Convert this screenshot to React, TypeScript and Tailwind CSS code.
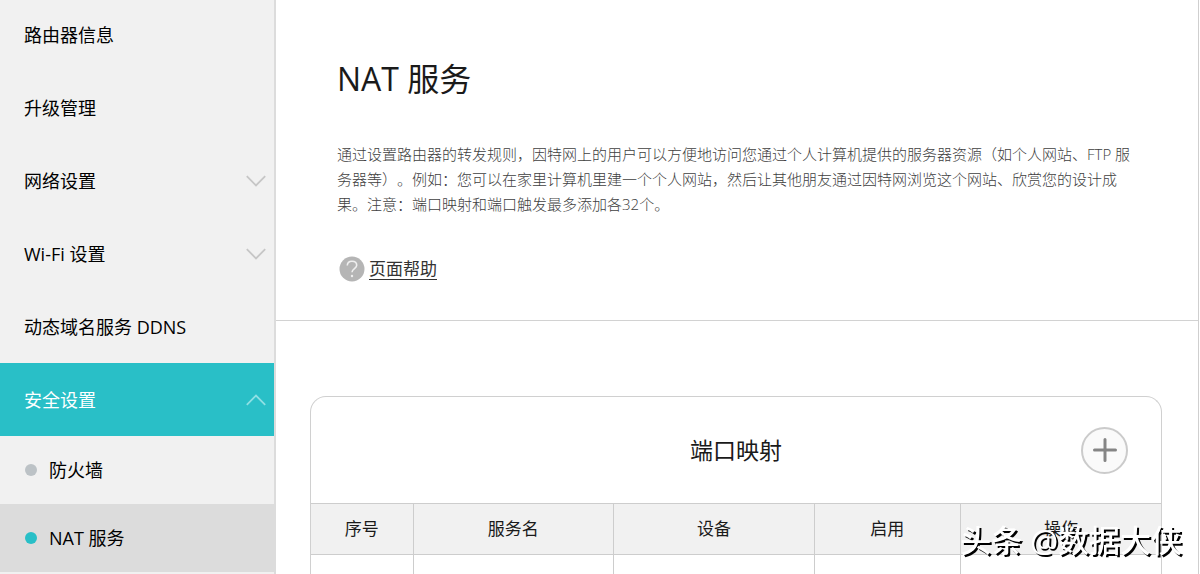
import { clsx } from "clsx";

const menu = [
  { label: "路由器信息" },
  { label: "升级管理" },
  { label: "网络设置", expandable: true },
  { label: "Wi-Fi 设置", expandable: true },
  { label: "动态域名服务 DDNS" },
  { label: "安全设置", expandable: true, open: true },
];

const subMenu = [
  { label: "防火墙" },
  { label: "NAT 服务", active: true },
];

const columns = [
  { label: "序号", width: "w-[12%]" },
  { label: "服务名", width: "w-[23.6%]" },
  { label: "设备", width: "w-[23.6%]" },
  { label: "启用", width: "w-[17.2%]" },
  { label: "操作", width: "w-[23.6%]" },
];

function Chevron({ open }: { open?: boolean }) {
  return (
    <svg
      viewBox="0 0 20 12"
      className={clsx("w-5 h-3", open ? "text-[#8fe0e4] rotate-180" : "text-[#c6c6c6]")}
      fill="none"
      stroke="currentColor"
      strokeWidth="1.8"
      aria-hidden="true"
    >
      <path d="M0.8 1.2 L10 10.4 L19.2 1.2" />
    </svg>
  );
}

function SideBar() {
  return (
    <nav className="w-[276px] shrink-0 bg-[#f1f1f1] border-r-2 border-[#dcdcdc] text-lg text-black overflow-hidden">
      <ul className="-mt-0.5">
        {menu.map((item) => (
          <li key={item.label}>
            {item.expandable ? (
              <button
                type="button"
                aria-expanded={!!item.open}
                className={clsx(
                  "flex w-full h-[73px] items-center justify-between pl-6 pr-2",
                  item.open && "bg-[#29bfc7] text-white"
                )}
              >
                <span>{item.label}</span>
                <Chevron open={item.open} />
              </button>
            ) : (
              <a href="#" className="flex h-[73px] items-center pl-6">
                {item.label}
              </a>
            )}
          </li>
        ))}
      </ul>
      <ul>
        {subMenu.map((item) => (
          <li key={item.label}>
            <a
              href="#"
              className={clsx(
                "flex h-[68px] items-center gap-3 pl-[25px]",
                item.active && "bg-[#dcdcdc]"
              )}
            >
              <span
                className={clsx(
                  "size-3 rounded-full",
                  item.active ? "bg-[#29bfc7]" : "bg-[#bcc2c6]"
                )}
              />
              {item.label}
            </a>
          </li>
        ))}
      </ul>
    </nav>
  );
}

function PageIntro() {
  return (
    <section className="px-[61px] pt-14 pb-8 border-b border-[#d2d2d2]">
      <h1 className="text-[32px] leading-[46px] text-[#1a1a1a]">NAT 服务</h1>
      <p className="mt-10 text-[15px] leading-[25px] font-light text-[#404040] [text-spacing-trim:space-all]">
        通过设置路由器的转发规则，因特网上的用户可以方便地访问您通过个人计算机提供的服务器资源（如个人网站、FTP
        服务器等）。例如：您可以在家里计算机里建一个个人网站，然后让其他朋友通过因特网浏览这个网站、欣赏您的设计成果。注意：端口映射和端口触发最多添加各32个。
      </p>
      <a href="#" className="mt-[39px] inline-flex items-center gap-1 text-[17px] text-[#333]">
        <svg viewBox="0 0 26 26" className="ml-0.5 size-[26px]" aria-hidden="true">
          <circle cx="13" cy="13" r="12.5" fill="#b5b5b5" />
          <path
            d="M8.3 9.6 C8.3 6.8 10.3 5.2 13 5.2 C15.7 5.2 17.7 6.8 17.7 9.3 C17.7 12.4 13 12.7 13 16.2"
            fill="none"
            stroke="#efefef"
            strokeWidth="1.6"
          />
          <circle cx="13" cy="20" r="1.2" fill="#efefef" />
        </svg>
        <span className="underline underline-offset-4">页面帮助</span>
      </a>
    </section>
  );
}

function PortMapping() {
  return (
    <section className="mt-[75px] ml-[34px] mr-9 rounded-t-2xl border border-b-0 border-[#d0d0d0]">
      <div className="grid grid-cols-[1fr_auto_1fr] items-center h-[106px] px-[33px]">
        <h2 className="col-start-2 text-[23px] text-[#1a1a1a]">端口映射</h2>
        <button
          type="button"
          aria-label="添加"
          className="justify-self-end flex size-[47px] items-center justify-center rounded-full border-2 border-[#cbcbcb] bg-[#fafafa]"
        >
          <svg viewBox="0 0 24 24" className="size-6" stroke="#858585" strokeWidth="3" strokeLinecap="round">
            <path d="M12 1.5 V22.5 M1.5 12 H22.5" />
          </svg>
        </button>
      </div>
      <table className="w-full table-fixed border-collapse text-[17px] text-[#1a1a1a]">
        <thead>
          <tr className="h-[51px] bg-[#f1f1f1] border-y border-[#cdcdcd]">
            {columns.map((col) => (
              <th
                key={col.label}
                scope="col"
                className={clsx("font-normal border-r border-[#cdcdcd] last:border-r-0", col.width)}
              >
                {col.label}
              </th>
            ))}
          </tr>
        </thead>
        <tbody>
          <tr className="h-[51px]">
            {columns.map((col) => (
              <td key={col.label} className="border-r border-[#cdcdcd] last:border-r-0" />
            ))}
          </tr>
        </tbody>
      </table>
    </section>
  );
}

export default function App() {
  return (
    <div className="flex h-screen overflow-hidden bg-white font-['Open_Sans','Noto_Sans_CJK_SC',sans-serif]">
      <SideBar />
      <main className="flex-1 min-w-0 mr-px overflow-hidden border-r border-[#cfcfcf]">
        <PageIntro />
        <PortMapping />
      </main>
      <div className="fixed right-[18px] bottom-3 text-[31px] leading-[44px] font-medium text-white whitespace-nowrap [text-shadow:2px_2px_0_#000] pointer-events-none">
        头条 @数据大侠
      </div>
    </div>
  );
}
